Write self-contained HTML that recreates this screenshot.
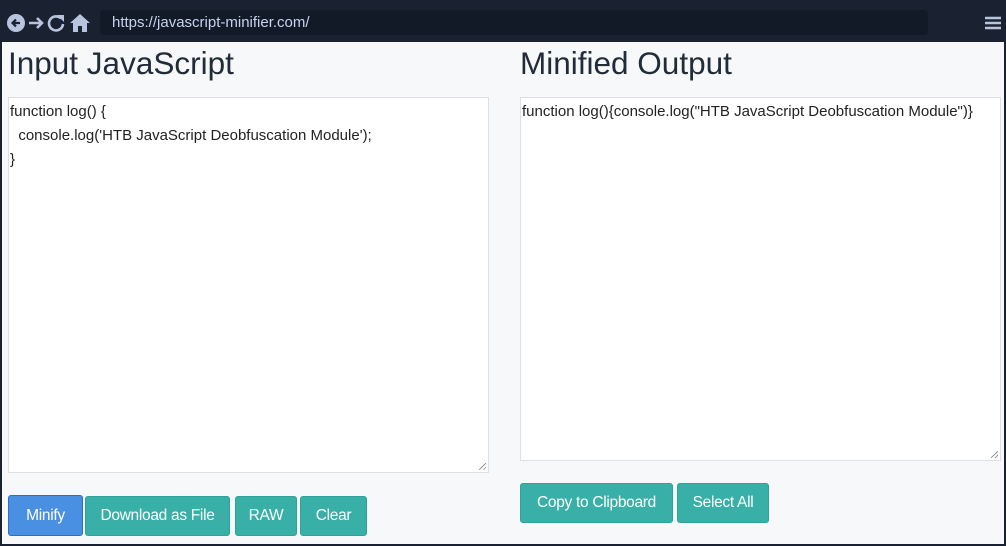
<!DOCTYPE html>
<html><head><style>
*{margin:0;padding:0;box-sizing:border-box}
body{width:1006px;height:546px;overflow:hidden;background:#1a2130;font-family:"Liberation Sans",sans-serif;position:relative}
.top{position:absolute;left:0;top:0;width:1006px;height:42px;background:#1a2130}
.url{position:absolute;left:100px;top:10px;width:828px;height:25px;background:#121a28;border-radius:4px;color:#c7d3ee;font-size:15px;line-height:25px;padding-left:12px}
.page{position:absolute;left:2px;top:42px;width:1002px;height:502px;background:#f6f8fa}
h1{position:absolute;font-weight:normal;font-size:31.5px;color:#222b38;top:3px}
.ta{position:absolute;background:#fff;border:1px solid #dde1e5;font-size:15px;color:#222;padding:2px 1px;line-height:24px;white-space:pre}
.btn{position:absolute;background:#38b0a7;color:#fff;font-size:15.5px;border:1px solid #2fa399;border-radius:3px;text-align:center;letter-spacing:-0.3px}
.grip{position:absolute;right:2px;bottom:2px;width:7px;height:7px;background:linear-gradient(135deg,transparent 45%,#999 45%,#999 55%,transparent 55%,transparent 75%,#999 75%,#999 85%,transparent 85%)}
</style></head><body>
<div class="top">
<svg style="position:absolute;left:6px;top:12px" width="90" height="22" viewBox="0 0 90 22">
<circle cx="10" cy="11" r="9" fill="#b8c4de"/><path d="M14 11H7M10 7.5 6.5 11 10 14.5" stroke="#1a2130" stroke-width="2.2" fill="none"/>
<path d="M23 11h13M31 6l5 5-5 5" stroke="#b8c4de" stroke-width="2.6" fill="none"/>
<path d="M55 6.5A7 7 0 1 0 57 12" stroke="#b8c4de" stroke-width="2.6" fill="none"/><path d="M51 3h7v7z" fill="#b8c4de"/>
<path d="M64 11 74 2 84 11h-3v9h-5v-6h-4v6h-5v-9z" fill="#b8c4de"/>
</svg>
<div class="url">https://javascript-minifier.com/</div>
<svg style="position:absolute;left:985px;top:16px" width="16" height="14"><path d="M0 2h16M0 7h16M0 12h16" stroke="#b8c4de" stroke-width="2.4"/></svg>
</div>
<div class="page">
<h1 style="left:6px">Input JavaScript</h1>
<h1 style="left:518px">Minified Output</h1>
<div class="ta" style="left:6px;top:55px;width:481px;height:376px">function log() {
  console.log('HTB JavaScript Deobfuscation Module');
}<div class="grip"></div></div>
<div class="ta" style="left:518px;top:55px;width:481px;height:364px">function log(){console.log("HTB JavaScript Deobfuscation Module")}<div class="grip"></div></div>
<div class="btn" style="left:6px;top:453px;width:75px;height:41px;line-height:39px;background:#4a90e2;border-color:#2a6fc4">Minify</div>
<div class="btn" style="left:83px;top:454px;width:145px;height:40px;line-height:38px">Download as File</div>
<div class="btn" style="left:233px;top:454px;width:62px;height:40px;line-height:38px">RAW</div>
<div class="btn" style="left:298px;top:454px;width:67px;height:40px;line-height:38px">Clear</div>
<div class="btn" style="left:518px;top:441px;width:153px;height:40px;line-height:38px">Copy to Clipboard</div>
<div class="btn" style="left:675px;top:441px;width:92px;height:40px;line-height:38px">Select All</div>
</div>
</body></html>
